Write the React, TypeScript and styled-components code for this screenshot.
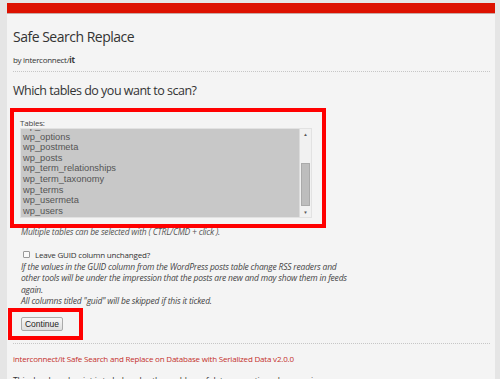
import { FunctionComponent } from "react";
import styled, { createGlobalStyle } from "styled-components";

const tables = [
  "wp_links",
  "wp_options",
  "wp_postmeta",
  "wp_posts",
  "wp_term_relationships",
  "wp_term_taxonomy",
  "wp_terms",
  "wp_usermeta",
  "wp_users",
];

const App: FunctionComponent = () => {
  return (
    <>
      <GlobalStyle />
      <Page>
        <TopBar />
        <Content>
          <Title>Safe Search Replace</Title>
          <Byline>
            by interconnect/<b>it</b>
          </Byline>
          <Divider />
          <Question>Which tables do you want to scan?</Question>
          <Highlight>
            <FieldLabel>Tables:</FieldLabel>
            <ListBox>
              <Options>
                {tables.map((t) => (
                  <Option key={t}>{t}</Option>
                ))}
              </Options>
              <ScrollBar>
                <Arrow>▲</Arrow>
                <Track>
                  <Thumb />
                </Track>
                <Arrow>▼</Arrow>
              </ScrollBar>
            </ListBox>
          </Highlight>
          <Hint>Multiple tables can be selected with ( CTRL/CMD + click ).</Hint>
          <CheckRow>
            <Box />
            <span>Leave GUID column unchanged?</span>
          </CheckRow>
          <Note>
            If the values in the GUID column from the WordPress posts table
            change RSS readers and
            <br />
            other tools will be under the impression that the posts are new and
            may show them in feeds
            <br />
            again.
            <br />
            All columns titled "guid" will be skipped if this it ticked.
          </Note>
          <ButtonFrame>
            <Button>Continue</Button>
          </ButtonFrame>
          <Divider $gap={3} />
          <Footer>
            interconnect/it Safe Search and Replace on Database with Serialized
            Data v2.0.0
          </Footer>
          <Blurb>
            This developed script is to help solve the problem of data
            corruption when moving
          </Blurb>
        </Content>
      </Page>
    </>
  );
};

export default App;

const GlobalStyle = createGlobalStyle`
  html, body {
    margin: 0;
    background: #e5e5e5;
    overflow: hidden;
  }
  body {
    font-family: "Open Sans", "Liberation Sans", sans-serif;
    color: #333;
  }
`;

const Page = styled.div`
  margin: 3px 0 0 7px;
  width: 488px;
  height: 400px;
  background: #f4f4f4;
`;

const TopBar = styled.div`
  height: 11px;
  background: #dd1100;
  border-bottom: 1px solid #c9a9a4;
  box-sizing: border-box;
`;

const Content = styled.div`
  padding: 14px 6px 0 6px;
`;

const Title = styled.h1`
  margin: 0;
  font-size: 14px;
  letter-spacing: -0.5px;
  font-weight: 400;
  line-height: 18px;
  color: #333;
`;

const Byline = styled.div`
  margin-top: 8px;
  font-size: 8px;
  letter-spacing: -0.3px;
  line-height: 12px;
  color: #333;
  b {
    font-weight: 700;
  }
`;

const Divider = styled.div<{ $gap?: number }>`
  margin-top: ${(p) => p.$gap ?? 5}px;
  border-top: 1px dotted #c6c6c6;
  width: 477px;
`;

const Question = styled.h2`
  margin: 10px 0 0;
  font-size: 12.5px;
  letter-spacing: -0.5px;
  font-weight: 400;
  line-height: 18px;
  color: #333;
`;

const Highlight = styled.div`
  margin: 8px 0 0 -3px;
  width: 302px;
  height: 106px;
  border: 4px solid #ff0000;
  padding: 6px 0 0 6px;
  box-sizing: content-box;
`;

const FieldLabel = styled.div`
  font-size: 8px;
  letter-spacing: -0.2px;
  line-height: 10px;
  color: #444;
`;

const ListBox = styled.div`
  display: flex;
  width: 292px;
  height: 90px;
  border: 1px solid #e2e2e2;
  box-sizing: border-box;
  background: #c8c8c8;
  overflow: hidden;
`;

const Options = styled.div`
  flex: 1;
  padding: 0 0 0 2px;
  margin-top: -8px;
`;

const Option = styled.div`
  font-family: "Liberation Sans", Arial, sans-serif;
  font-size: 9.3px;
  line-height: 10.6px;
  color: #555;
`;

const ScrollBar = styled.div`
  width: 11px;
  display: flex;
  flex-direction: column;
  background: #f1f1f1;
  border-left: 1px solid #dcdcdc;
`;

const Arrow = styled.div`
  height: 10px;
  font-size: 4.5px;
  line-height: 10px;
  text-align: center;
  color: #555;
`;

const Track = styled.div`
  flex: 1;
  display: flex;
  flex-direction: column;
  justify-content: flex-end;
  padding: 0 1px 1px;
`;

const Thumb = styled.div`
  height: 43px;
  background: #bdbdbd;
  border: 1px solid #aaa;
  box-sizing: border-box;
`;

const Hint = styled.div`
  margin: -2px 0 0 8px;
  font-size: 8.5px;
  letter-spacing: -0.2px;
  font-style: italic;
  line-height: 11px;
  color: #555;
`;

const CheckRow = styled.label`
  display: flex;
  align-items: center;
  gap: 5px;
  margin: 11.5px 0 0 10px;
  font-size: 8px;
  letter-spacing: -0.2px;
  line-height: 12px;
  color: #333;
`;

const Box = styled.span`
  width: 5px;
  height: 5px;
  border: 1px solid #9a9a9a;
  background: #fafafa;
  border-radius: 1px;
`;

const Note = styled.div`
  margin: 0 0 0 8px;
  font-size: 8.5px;
  letter-spacing: -0.2px;
  font-style: italic;
  line-height: 11.5px;
  color: #444;
  white-space: nowrap;
`;

const ButtonFrame = styled.div`
  margin: 1px 0 0 -5px;
  width: 58px;
  height: 19px;
  border: 4px solid #ff0000;
  padding: 5px 0 0 9px;
  box-sizing: content-box;
`;

const Button = styled.button`
  display: block;
  font-family: "Liberation Sans", Arial, sans-serif;
  font-size: 8.5px;
  color: #222;
  width: 42px;
  height: 14px;
  padding: 0;
  background: linear-gradient(#f7f7f7, #dedede);
  border: 1px solid #aaa;
  border-radius: 2px;
`;

const Footer = styled.div`
  margin-top: 9px;
  font-size: 8px;
  letter-spacing: -0.2px;
  line-height: 12px;
  color: #c4302b;
  white-space: nowrap;
`;

const Blurb = styled.div`
  margin-top: 10px;
  font-size: 8.5px;
  letter-spacing: -0.2px;
  line-height: 12px;
  color: #333;
  white-space: nowrap;
`;
